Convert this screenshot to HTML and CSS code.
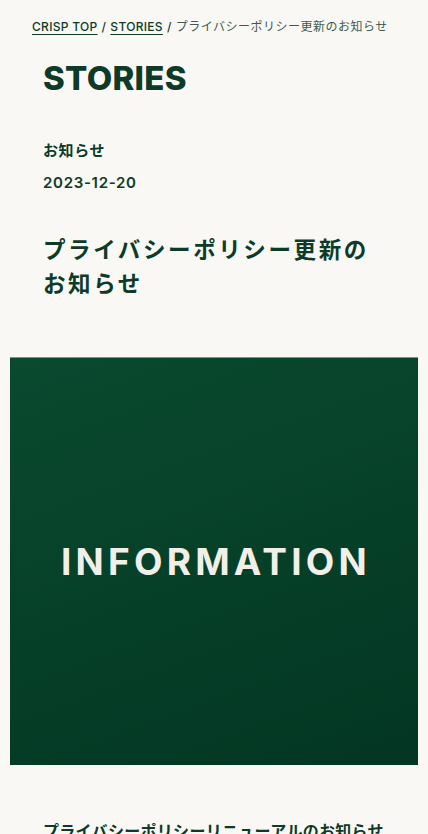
FILE: index.html
```html
<!DOCTYPE html>
<html lang="ja">
<head>
<meta charset="utf-8">
<meta name="viewport" content="width=device-width, initial-scale=1">
<title>プライバシーポリシー更新のお知らせ | STORIES</title>
<link rel="stylesheet" href="styles.css">
</head>
<body>
<nav class="breadcrumb">
  <a href="#" class="crumb-link">CRISP TOP</a><span class="sep">/</span><a href="#" class="crumb-link">STORIES</a><span class="sep">/</span><span class="crumb-current">プライバシーポリシー更新のお知らせ</span>
</nav>
<header class="page-head">
  <h1 class="section-title">STORIES</h1>
  <p class="category">お知らせ</p>
  <p class="date">2023-12-20</p>
  <h2 class="article-title">プライバシーポリシー更新の<br>お知らせ</h2>
</header>
<figure class="hero">
  <span class="hero-text">INFORMATION</span>
</figure>
<section class="body">
  <h3 class="body-heading">プライバシーポリシーリニューアルのお知らせ</h3>
</section>
</body>
</html>
```
FILE: styles.css
```css
* { box-sizing: border-box; }
html, body { margin: 0; padding: 0; }
body {
  background: #f9f8f4;
  color: #0d3b28;
  font-family: "Inter", "Noto Sans CJK JP", sans-serif;
  width: 428px;
  height: 834px;
  overflow: hidden;
}
.breadcrumb {
  padding: 18px 0 0 32px;
  font-size: 12px;
  letter-spacing: 0.3px;
  line-height: 18px;
  font-weight: 500;
  white-space: nowrap;
}
.crumb-link {
  color: #0d3b28;
  text-decoration: underline;
  text-underline-offset: 3px;
  text-decoration-thickness: 1px;
}
.sep { margin: 0 4px; color: #0d3b28; }
.crumb-current { color: #3e5a4c; font-weight: 400; letter-spacing: 0.5px; }
.page-head {
  padding: 0 43px;
}
.section-title {
  margin: 20px 0 0;
  font-size: 33px;
  line-height: 44px;
  font-weight: 800;
  letter-spacing: 0.3px;
}
.category {
  margin: 40px 0 0;
  font-size: 15px;
  font-weight: 700;
  letter-spacing: 0.6px;
  line-height: 22px;
}
.date {
  margin: 10px 0 0;
  font-size: 15px;
  font-weight: 600;
  letter-spacing: 0.7px;
  line-height: 22px;
}
.article-title {
  margin: 39px 0 0;
  font-size: 22.5px;
  font-weight: 700;
  letter-spacing: 2.6px;
  line-height: 34px;
}
.hero {
  margin: 56px 10px 0;
  aspect-ratio: 1 / 1;
  display: flex;
  align-items: center;
  justify-content: center;
  background: linear-gradient(160deg, #0a4a2f 0%, #063f28 55%, #033623 100%);
  border-top: 1px solid #6f9c83;
}
.hero-text {
  color: #f1efe8;
  font-size: 37px;
  font-weight: 700;
  letter-spacing: 4.2px;
  padding-left: 4px;
}
.body { padding: 52px 43px 0; }
.body-heading {
  margin: 0;
  font-size: 16px;
  font-weight: 700;
  letter-spacing: 0.3px;
  line-height: 28px;
  white-space: nowrap;
}
```
